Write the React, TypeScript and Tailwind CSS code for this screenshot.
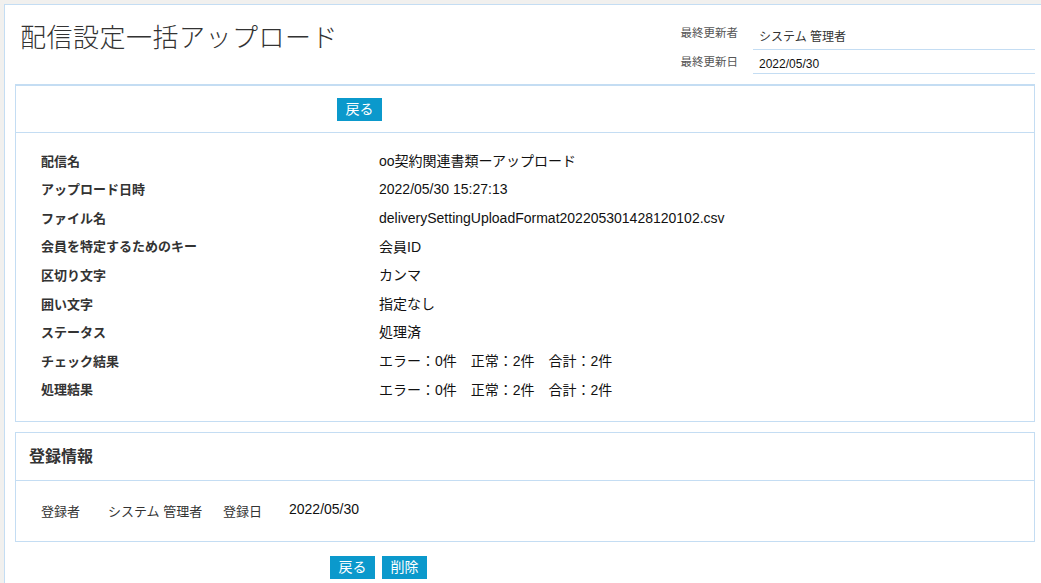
import React from 'react';

const font = { fontFamily: '"Liberation Sans", "Noto Sans CJK JP", sans-serif' };

const rows: { label: string; value: string }[] = [
  { label: '配信名', value: 'oo契約関連書類ーアップロード' },
  { label: 'アップロード日時', value: '2022/05/30 15:27:13' },
  { label: 'ファイル名', value: 'deliverySettingUploadFormat202205301428120102.csv' },
  { label: '会員を特定するためのキー', value: '会員ID' },
  { label: '区切り文字', value: 'カンマ' },
  { label: '囲い文字', value: '指定なし' },
  { label: 'ステータス', value: '処理済' },
  { label: 'チェック結果', value: 'エラー：0件　正常：2件　合計：2件' },
  { label: '処理結果', value: 'エラー：0件　正常：2件　合計：2件' },
];

const BlueButton: React.FC<{ label: string }> = ({ label }) => (
  <button className="h-[23px] w-[45px] bg-[#0b99cc] text-[14px] leading-[23px] text-white">
    {label}
  </button>
);

export default function App() {
  return (
    <div className="min-h-screen w-full overflow-hidden bg-[#f1f0ee] pl-[4px] pt-[4px]" style={font}>
      <div className="min-h-[579px] border-l border-t border-[#c4ddf3] bg-white pb-[4px] pl-[10px] pr-[6px]">
        {/* Header: title and last update */}
        <div className="flex h-[79px] items-start justify-between">
          <h1 className="pl-[5px] pt-[14px] text-[26px] font-light tracking-[0.5px] text-[#333]">
            配信設定一括アップロード
          </h1>
          <div className="mt-[16px] grid grid-cols-[auto_282px]">
            <div className="pr-[15px] pt-[4px] text-[11.5px] text-[#555]">最終更新者</div>
            <div className="h-[29px] border-b border-[#c4ddf3] pl-[6px] pt-[7px] text-[12px] text-[#333]">
              システム 管理者
            </div>
            <div className="pr-[15px] pt-[4px] text-[11.5px] text-[#555]">最終更新日</div>
            <div className="h-[24px] border-b border-[#c4ddf3] pl-[6px] pt-[5px] text-[12px] text-[#111]">
              2022/05/30
            </div>
          </div>
        </div>

        {/* Detail panel */}
        <div className="border border-t-2 border-[#c4ddf3]">
          <div className="flex h-[47px] items-center border-b border-[#c4ddf3] pl-[321px]">
            <BlueButton label="戻る" />
          </div>
          <div className="pb-[17px] pl-[25px] pt-[14px]">
            {rows.map((r) => (
              <div key={r.label} className="flex h-[28.6px] items-center">
                <div className="w-[338px] text-[13px] font-semibold text-[#333]">{r.label}</div>
                <div className="text-[14px] text-[#111]">{r.value}</div>
              </div>
            ))}
          </div>
        </div>

        {/* Registration info */}
        <div className="mt-[10px] border border-[#c4ddf3]">
          <div className="flex h-[48px] items-center border-b border-[#c4ddf3] pl-[13px]">
            <h2 className="text-[16px] font-bold text-[#333]">登録情報</h2>
          </div>
          <div className="flex h-[60px] items-center pl-[25px] text-[13px]">
            <span className="w-[67px] text-[#333]">登録者</span>
            <span className="w-[115px] text-[#333]">システム 管理者</span>
            <span className="w-[66px] text-[#333]">登録日</span>
            <span className="-mt-[4px] text-[14px] text-[#111]">2022/05/30</span>
          </div>
        </div>

        <div className="mt-[14px] flex gap-[7px] pl-[315px]">
          <BlueButton label="戻る" />
          <BlueButton label="削除" />
        </div>
      </div>
    </div>
  );
}
